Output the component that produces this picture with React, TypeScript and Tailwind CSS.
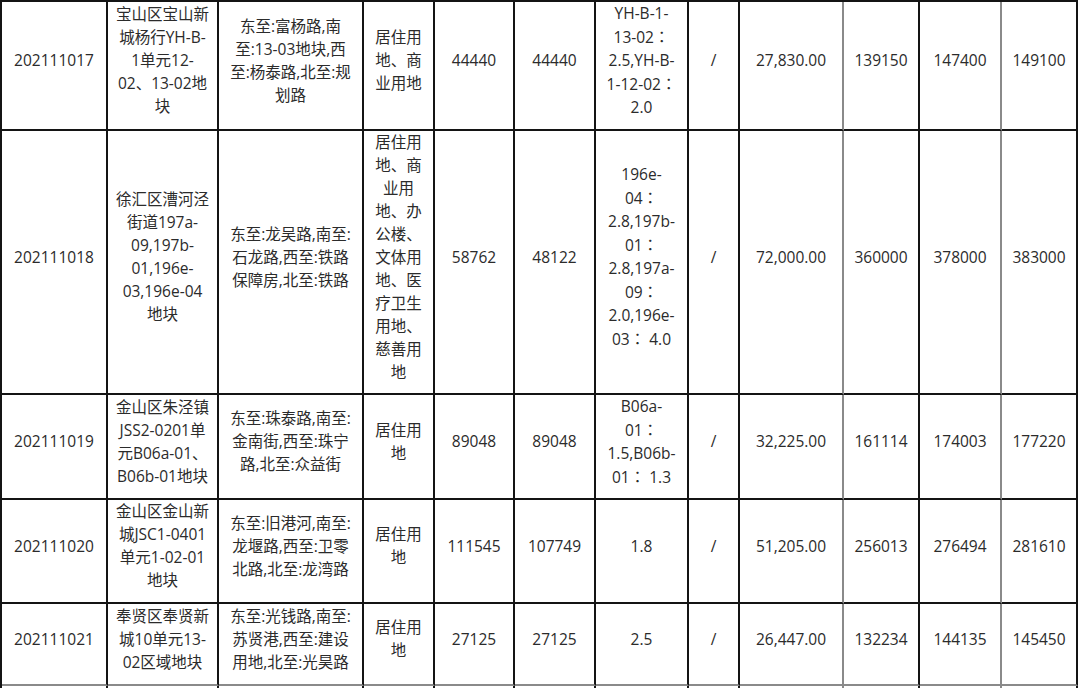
import React from "react";

type Row = {
  h: string;
  cells: string[][];
};

const rows: Row[] = [
  {
    h: "h-[129px]",
    cells: [
      ["202111017"],
      ["宝山区宝山新", "城杨行YH-B-", "1单元12-", "02、13-02地", "块"],
      ["东至:富杨路,南", "至:13-03地块,西", "至:杨泰路,北至:规", "划路"],
      ["居住用", "地、商", "业用地"],
      ["44440"],
      ["44440"],
      ["YH-B-1-", "13-02：", "2.5,YH-B-", "1-12-02：", "2.0"],
      ["/"],
      ["27,830.00"],
      ["139150"],
      ["147400"],
      ["149100"],
    ],
  },
  {
    h: "h-[264px]",
    cells: [
      ["202111018"],
      ["徐汇区漕河泾", "街道197a-", "09,197b-", "01,196e-", "03,196e-04", "地块"],
      ["东至:龙吴路,南至:", "石龙路,西至:铁路", "保障房,北至:铁路"],
      ["居住用", "地、商", "业用", "地、办", "公楼、", "文体用", "地、医", "疗卫生", "用地、", "慈善用", "地"],
      ["58762"],
      ["48122"],
      ["196e-", "04：", "2.8,197b-", "01：", "2.8,197a-", "09：", "2.0,196e-", "03：\u00a04.0"],
      ["/"],
      ["72,000.00"],
      ["360000"],
      ["378000"],
      ["383000"],
    ],
  },
  {
    h: "h-[105px]",
    cells: [
      ["202111019"],
      ["金山区朱泾镇", "JSS2-0201单", "元B06a-01、", "B06b-01地块"],
      ["东至:珠泰路,南至:", "金南街,西至:珠宁", "路,北至:众益街"],
      ["居住用", "地"],
      ["89048"],
      ["89048"],
      ["B06a-", "01：", "1.5,B06b-", "01：\u00a01.3"],
      ["/"],
      ["32,225.00"],
      ["161114"],
      ["174003"],
      ["177220"],
    ],
  },
  {
    h: "h-[104px]",
    cells: [
      ["202111020"],
      ["金山区金山新", "城JSC1-0401", "单元1-02-01", "地块"],
      ["东至:旧港河,南至:", "龙堰路,西至:卫零", "北路,北至:龙湾路"],
      ["居住用", "地"],
      ["111545"],
      ["107749"],
      ["1.8"],
      ["/"],
      ["51,205.00"],
      ["256013"],
      ["276494"],
      ["281610"],
    ],
  },
  {
    h: "h-[82px]",
    cells: [
      ["202111021"],
      ["奉贤区奉贤新", "城10单元13-", "02区域地块"],
      ["东至:光钱路,南至:", "苏贤港,西至:建设", "用地,北至:光昊路"],
      ["居住用", "地"],
      ["27125"],
      ["27125"],
      ["2.5"],
      ["/"],
      ["26,447.00"],
      ["132234"],
      ["144135"],
      ["145450"],
    ],
  },
];

const grayRight = [8, 10];

function Line({ text }: { text: string }) {
  const parts = text.split("：");
  return (
    <div className="leading-[23px] whitespace-nowrap">
      {parts.map((p, i) => (
        <React.Fragment key={i}>
          {p}
          {i < parts.length - 1 && (
            <span style={{ fontFamily: '"Noto Sans CJK TC", sans-serif' }}>：</span>
          )}
        </React.Fragment>
      ))}
    </div>
  );
}

export default function App() {
  return (
    <div
      className="w-[1080px] h-[688px] overflow-hidden bg-white text-[#2b2b2b] text-[15.5px]"
      style={{ fontFamily: '"Open Sans", "Noto Sans CJK SC", sans-serif' }}
    >
      <div className="w-[1078px] grid grid-cols-[106px_111px_145px_71px_80px_81px_93px_51px_104px_76px_82px_76px] border-l-2 border-t-2 border-[#141414]">
        {rows.map((row, ri) =>
          row.cells.map((lines, ci) => (
            <div
              key={`${ri}-${ci}`}
              className={`${row.h} flex flex-col items-center justify-center text-center pb-[10px] border-r-2 border-b-2 ${
                grayRight.includes(ci) ? "border-r-[#8a8a8a]" : "border-r-[#141414]"
              } ${ri === 4 ? "border-b-[#8a8a8a]" : "border-b-[#141414]"}`}
            >
              {lines.map((l, li) => (
                <Line key={li} text={l} />
              ))}
            </div>
          ))
        )}
        {Array.from({ length: 12 }).map((_, ci) => (
          <div
            key={`e-${ci}`}
            className={`h-[60px] border-r-2 ${
              grayRight.includes(ci) ? "border-r-[#8a8a8a]" : "border-r-[#141414]"
            }`}
          />
        ))}
      </div>
    </div>
  );
}
